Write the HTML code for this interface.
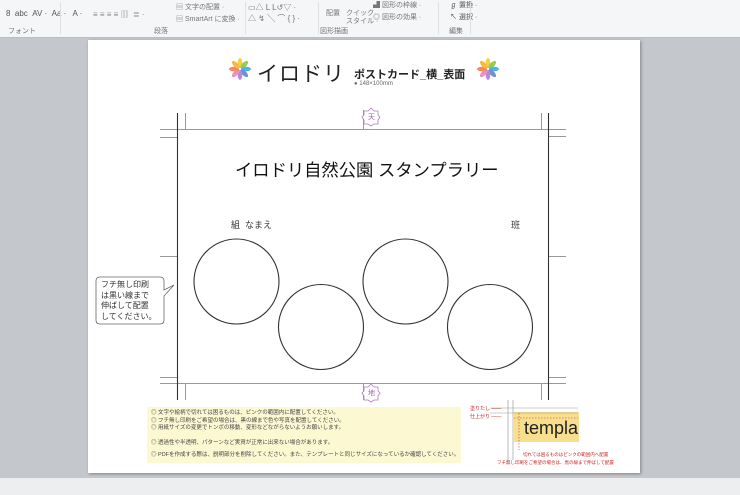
<!DOCTYPE html>
<html><head><meta charset="utf-8">
<style>
body{margin:0;width:740px;height:495px;overflow:hidden;background:#c4c7cc;font-family:"Liberation Sans","Noto Sans CJK JP",sans-serif;position:relative}
.rib{position:absolute;left:0;top:0;width:740px;height:37px;background:#f5f6f8;border-bottom:1px solid #b9bec6}
.rib span{position:absolute;font-size:7px;color:#777;white-space:nowrap}
.sep{position:absolute;top:2px;width:1px;height:32px;background:#dde0e4}
.page{position:absolute;left:88px;top:40px;width:552px;height:433px;background:#fff;box-shadow:1px 1px 3px rgba(0,0,0,.35)}
.abs{position:absolute}
.t{position:absolute;white-space:nowrap;color:#222}
.bot{position:absolute;left:0;top:478px;width:740px;height:17px;background:#eceef0}
</style></head><body>
<div class="rib">
<span style="left:6px;top:9px;font-size:8px;color:#555">8 &nbsp;abc &nbsp;AV · &nbsp;Aa · &nbsp; A ·</span>
<span style="left:93px;top:9px;font-size:8px;color:#888">≡ ≡ ≡ ≡ ▥ &nbsp;≣ ·</span>
<span style="left:176px;top:2px">▤ 文字の配置 ·</span>
<span style="left:176px;top:14px">▤ SmartArt に変換 ·</span>
<span style="left:248px;top:2px;font-size:8px">▭△ L L↺▽ ·</span>
<span style="left:248px;top:13px;font-size:8px">△ ↯ ╲ ⌒ { } ·</span>
<span style="left:326px;top:8px">配置</span>
<span style="left:346px;top:8px">クイック</span>
<span style="left:346px;top:16px">スタイル ·</span>
<span style="left:373px;top:0px">▟ 図形の枠線 ·</span>
<span style="left:373px;top:12px">◎ 図形の効果 ·</span>
<span style="left:450px;top:0px;color:#555">ℊ 置換 ·</span>
<span style="left:450px;top:12px;color:#555">↖ 選択 ·</span>
<span style="left:8px;top:26px">フォント</span>
<span style="left:154px;top:26px">段落</span>
<span style="left:320px;top:26px">図形描画</span>
<span style="left:449px;top:26px">編集</span>
<div class="sep" style="left:60px"></div><div class="sep" style="left:245px"></div><div class="sep" style="left:318px"></div><div class="sep" style="left:438px"></div><div class="sep" style="left:470px"></div>
</div>
<div class="bot"></div>
<div class="page"></div>
<svg class="abs" style="left:0;top:0" width="740" height="495">
<defs><g id="fl">
<ellipse cx="0" cy="-6" rx="2.3" ry="5" fill="#f4d23a"/>
<ellipse cx="0" cy="-6" rx="2.3" ry="5" fill="#9acb4a" transform="rotate(45)"/>
<ellipse cx="0" cy="-6" rx="2.3" ry="5" fill="#4fb3e0" transform="rotate(90)"/>
<ellipse cx="0" cy="-6" rx="2.3" ry="5" fill="#6f8fd8" transform="rotate(135)"/>
<ellipse cx="0" cy="-6" rx="2.3" ry="5" fill="#b58ad6" transform="rotate(180)"/>
<ellipse cx="0" cy="-6" rx="2.3" ry="5" fill="#ef8fb5" transform="rotate(225)"/>
<ellipse cx="0" cy="-6" rx="2.3" ry="5" fill="#f28a5a" transform="rotate(270)"/>
<ellipse cx="0" cy="-6" rx="2.3" ry="5" fill="#f7b84a" transform="rotate(315)"/>
</g></defs>
<use href="#fl" x="240" y="69"/><use href="#fl" x="488" y="69"/>
<g stroke="#999" stroke-width="1" fill="none">
<line x1="160" y1="129.5" x2="566" y2="129.5"/>
<line x1="160" y1="383.5" x2="566" y2="383.5"/>
<line x1="160" y1="137.5" x2="177" y2="137.5"/><line x1="160" y1="256.5" x2="177" y2="256.5"/><line x1="160" y1="377.5" x2="177" y2="377.5"/>
<line x1="549" y1="136.5" x2="566" y2="136.5"/><line x1="549" y1="256.5" x2="566" y2="256.5"/><line x1="549" y1="377.5" x2="566" y2="377.5"/>
<line x1="185.5" y1="113" x2="185.5" y2="129"/><line x1="541.5" y1="113" x2="541.5" y2="129"/>
<line x1="185.5" y1="384" x2="185.5" y2="400"/><line x1="541.5" y1="384" x2="541.5" y2="400"/>
<line x1="363.5" y1="110" x2="363.5" y2="129"/><line x1="363.5" y1="384" x2="363.5" y2="400"/>
</g>
<g stroke="#333" stroke-width="1.1" fill="none">
<line x1="177.5" y1="113" x2="177.5" y2="400"/><line x1="548.5" y1="113" x2="548.5" y2="400"/>
<circle cx="236.5" cy="281.5" r="42.5"/><circle cx="321" cy="327" r="42.5"/>
<circle cx="405.5" cy="281.5" r="42.5"/><circle cx="490" cy="327" r="42.5"/>
</g>
<g stroke="#b07bbf" stroke-width=".8" fill="#fff">
<polygon points="371,108 374,111 378,111 378,115 380,117 378,120 378,124 374,124 371,126 368,124 364,124 364,120 362,117 364,115 364,111 368,111"/>
<polygon points="371,384 374,387 378,387 378,391 380,393 378,396 378,400 374,400 371,402 368,400 364,400 364,396 362,393 364,391 364,387 368,387"/>
</g>
<path d="M100,277 H160 Q164,277 164,281 V290 L174,285 L164,296 V320 Q164,324 160,324 H100 Q96,324 96,320 V281 Q96,277 100,277Z" fill="#fff" stroke="#666" stroke-width=".8"/>
<rect x="147" y="407" width="314" height="56" fill="#fbf8d2"/>
<rect x="514" y="412" width="65" height="30" fill="#f7df8e"/>
<line x1="508" y1="400" x2="508" y2="460" stroke="#bbb"/><line x1="513" y1="400" x2="513" y2="460" stroke="#bbb"/>
<line x1="490" y1="408" x2="578" y2="408" stroke="#999" stroke-width=".6"/>
<line x1="490" y1="413" x2="578" y2="413" stroke="#999" stroke-width=".6"/>
<path d="M519,413 V450 M514,418 H578" stroke="#c33" stroke-width=".6" stroke-dasharray="1.5,1.5" fill="none"/>
</svg>
<div class="t" style="left:257px;top:58px;font-size:21px;letter-spacing:1px;color:#222">イロドリ</div>
<div class="t" style="left:354px;top:66px;font-size:11px;font-weight:bold">ポストカード_横_表面</div>
<div class="t" style="left:354px;top:81px;font-size:6px;color:#666">● 148×100mm</div>
<div class="t" style="left:235px;top:156px;font-size:17.3px;color:#111">イロドリ自然公園 スタンプラリー</div>
<div class="t" style="left:231px;top:218px;font-size:9px;color:#333">組 &nbsp;なまえ</div>
<div class="t" style="left:511px;top:218px;font-size:9px;color:#333">班</div>
<div class="t" style="left:101px;top:280px;font-size:8px;line-height:10.5px;color:#333">フチ無し印刷<br>は黒い線まで<br>伸ばして配置<br>してください。</div>
<div class="t" style="left:368px;top:112px;font-size:7px;color:#a060b0">天</div>
<div class="t" style="left:368px;top:388px;font-size:7px;color:#a060b0">地</div>
<div class="t" style="left:151px;top:410px;font-size:5.5px;line-height:7.5px;color:#444">◎ 文字や絵柄で切れては困るものは、ピンクの範囲内に配置してください。<br>◎ フチ無し印刷をご希望の場合は、黒の線まで色や写真を配置してください。<br>◎ 用紙サイズの変更でトンボの移動、変形などながらないようお願いします。</div>
<div class="t" style="left:151px;top:438px;font-size:5.5px;color:#444">◎ 透過性や半透明、パターンなど実資が正常に出来ない場合があります。</div>
<div class="t" style="left:151px;top:450px;font-size:5.5px;color:#444">◎ PDFを作成する際は、説明部分を削除してください。また、テンプレートと同じサイズになっているか確認してください。</div>
<div class="t" style="left:470px;top:405px;font-size:5px;line-height:8px;color:#c22">塗りたし ——<br>仕上がり ——</div>
<div class="t" style="left:524px;top:418px;font-size:18px;color:#222">templa</div>
<div class="t" style="left:523px;top:452px;font-size:4.5px;color:#c22">切れては困るものはピンクの範囲内へ配置</div>
<div class="t" style="left:497px;top:460px;font-size:4.5px;color:#c22">フチ無し印刷をご希望の場合は、黒の線まで伸ばして配置</div>
</body></html>
